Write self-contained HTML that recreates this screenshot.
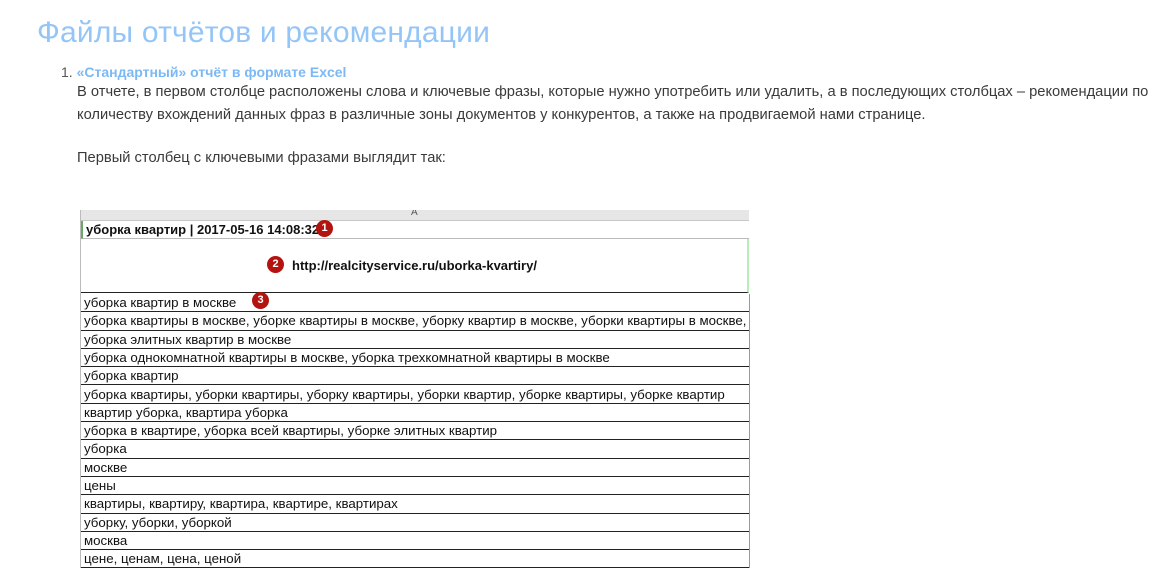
<!DOCTYPE html>
<html><head><meta charset="utf-8"><style>
body{margin:0;background:#fff;width:1162px;height:568px;overflow:hidden;position:relative;font-family:"Liberation Sans",sans-serif;}
.t{position:absolute;white-space:nowrap;}
h1{position:absolute;left:37px;top:16px;margin:0;font-weight:normal;font-size:30px;color:#94c5f7;white-space:nowrap;letter-spacing:0.2px}
.li{left:61px;top:64px;font-size:14px;color:#555}
.li b{color:#7cb9f4}
.p{left:77px;font-size:14.7px;color:#3a3a3a;}
.tb{position:absolute;left:80px;top:210px;width:670px;height:358px;overflow:hidden;border-left:1px solid #bbb;}
.hd{position:absolute;left:0;top:0;width:668px;height:10px;background:#e6e6e6;border-bottom:1px solid #c8c8c8;font-size:10px;color:#555;}
.r{position:absolute;left:0;width:668px;border-bottom:1px solid #222;font-size:13.3px;color:#111;padding-left:3px;box-sizing:border-box;white-space:nowrap;overflow:hidden;line-height:18px;}
.m{position:absolute;width:17px;height:17px;border-radius:50%;background:#b3140f;color:#fff;font-size:11px;font-weight:bold;text-align:center;line-height:17px;}
</style></head><body>
<h1>Файлы отчётов и рекомендации</h1>
<div class="t li">1. <b>«Стандартный» отчёт в формате Excel</b></div>
<div class="t p" style="top:84px">В отчете, в первом столбце расположены слова и ключевые фразы, которые нужно употребить или удалить, а в последующих столбцах – рекомендации по</div>
<div class="t p" style="top:107px">количеству вхождений данных фраз в различные зоны документов у конкурентов, а также на продвигаемой нами странице.</div>
<div class="t p" style="top:150px">Первый столбец с ключевыми фразами выглядит так:</div>
<div class="tb">
<div class="hd"><span style="position:absolute;left:330px;top:-3px">A</span></div>
<div class="r" style="top:11px;height:18px;border-bottom:1px solid #bbb;font-weight:bold;font-size:13px;border-left:2px solid #6a6">уборка квартир | 2017-05-16 14:08:32</div>
<div style="position:absolute;left:0;top:29px;width:668px;height:54px;border-bottom:1px solid #222;border-right:2px solid #b8ecb8;box-sizing:border-box"></div>
<div class="t" style="left:211px;top:48px;font-size:13px;font-weight:bold;color:#111">http://realcityservice.ru/uborka-kvartiry/</div>
<div class="r" style="top:84px;height:18.3px">уборка квартир в москве</div>
<div class="r" style="top:102.3px;height:18.3px">уборка квартиры в москве, уборке квартиры в москве, уборку квартир в москве, уборки квартиры в москве,</div>
<div class="r" style="top:120.6px;height:18.3px">уборка элитных квартир в москве</div>
<div class="r" style="top:138.9px;height:18.3px">уборка однокомнатной квартиры в москве, уборка трехкомнатной квартиры в москве</div>
<div class="r" style="top:157.2px;height:18.3px">уборка квартир</div>
<div class="r" style="top:175.5px;height:18.3px">уборка квартиры, уборки квартиры, уборку квартиры, уборки квартир, уборке квартиры, уборке квартир</div>
<div class="r" style="top:193.8px;height:18.3px">квартир уборка, квартира уборка</div>
<div class="r" style="top:212.1px;height:18.3px">уборка в квартире, уборка всей квартиры, уборке элитных квартир</div>
<div class="r" style="top:230.4px;height:18.3px">уборка</div>
<div class="r" style="top:248.7px;height:18.3px">москве</div>
<div class="r" style="top:267px;height:18.3px">цены</div>
<div class="r" style="top:285.3px;height:18.3px">квартиры, квартиру, квартира, квартире, квартирах</div>
<div class="r" style="top:303.6px;height:18.3px">уборку, уборки, уборкой</div>
<div class="r" style="top:321.9px;height:18.3px">москва</div>
<div class="r" style="top:340.2px;height:18.3px">цене, ценам, цена, ценой</div>
<div style="position:absolute;left:668px;top:84px;width:1px;height:280px;background:#999"></div>
<div class="m" style="left:235px;top:10px">1</div>
<div class="m" style="left:186px;top:46px">2</div>
<div class="m" style="left:171px;top:82px">3</div>
</div>
</body></html>
